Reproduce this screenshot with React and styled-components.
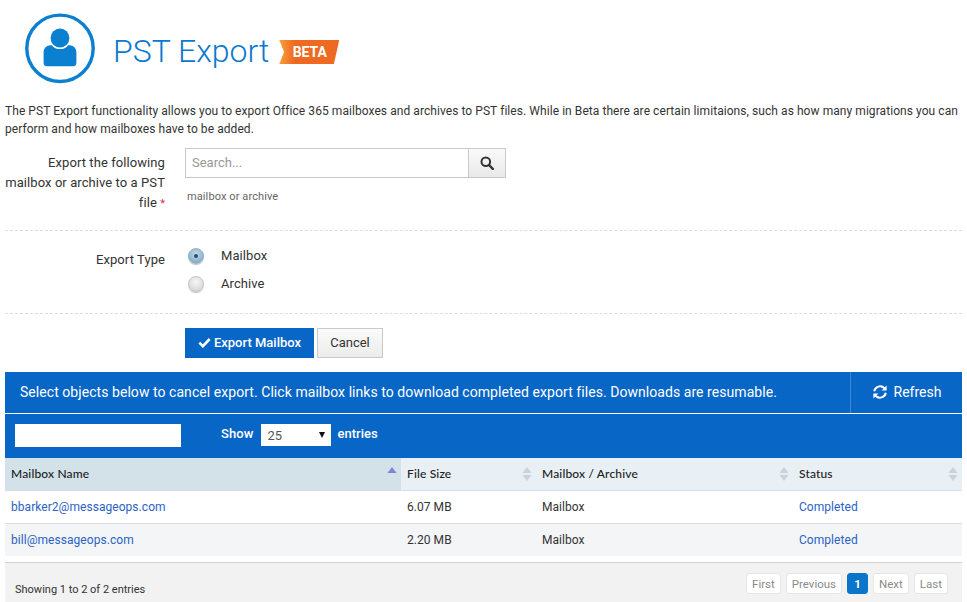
import React from "react";
import styled, { createGlobalStyle } from "styled-components";

const Global = createGlobalStyle`
  html, body { margin: 0; padding: 0; background: #fff; }
  body { font-family: Roboto, "Liberation Sans", sans-serif; color: #333; overflow: hidden; }
  * { box-sizing: border-box; }
`;

const Page = styled.div`
  width: 967px;
  height: 602px;
  padding: 0 5px;
  overflow: hidden;
`;
const Header = styled.header`
  display: flex;
  align-items: center;
  height: 96px;
  padding-left: 20px;
`;
const Title = styled.h1`
  margin: 6px 10px 0 16px;
  font-size: 32px;
  line-height: 40px;
  font-weight: 300;
  color: #0b79d0;
`;
const Intro = styled.p`
  margin: 6px 0 10px;
  font-size: 12px;
  line-height: 18px;
  letter-spacing: 0.065px;
  color: #333;
`;
const Row = styled.div`
  display: flex;
`;
const Label = styled.div`
  width: 160px;
  text-align: right;
  font-size: 13px;
  line-height: 20px;
  letter-spacing: 0.08px;
  color: #333;
  padding-top: ${(p) => p.$top || 0}px;
`;
const Required = styled.span`
  color: #e02a4a;
  font-size: 11px;
`;
const Field = styled.div`
  margin-left: 20px;
`;
const SearchBox = styled.div`
  display: flex;
  width: 321px;
  height: 30px;
`;
const SearchInput = styled.input`
  width: 283px;
  height: 30px;
  border: 1px solid #c9c9c9;
  border-right: none;
  padding: 0 6px 2px;
  font: 13px Roboto, sans-serif;
  &::placeholder { color: #999; opacity: 1; }
`;
const SearchButton = styled.button`
  width: 38px;
  height: 30px;
  border: 1px solid #c9c9c9;
  background: linear-gradient(#fafafa, #e9e9e9);
  display: flex;
  align-items: center;
  justify-content: center;
  padding: 0;
`;
const Hint = styled.div`
  margin: 12px 0 0 2px;
  font-size: 11px;
  line-height: 14px;
  color: #666;
  letter-spacing: 0.1px;
`;
const Dashed = styled.div`
  border-top: 1px dashed #ddd;
  height: 0;
  margin-top: ${(p) => p.$mt}px;
`;
const RadioList = styled.div`
  display: flex;
  flex-direction: column;
  gap: 8px;
  margin-left: 3px;
  padding-top: 14px;
`;
const RadioRow = styled.label`
  display: flex;
  align-items: center;
  height: 20px;
  font-size: 13px;
  letter-spacing: 0.08px;
  color: #333;
`;
const RadioDot = styled.span`
  width: 16px;
  height: 16px;
  border-radius: 50%;
  margin: 1px 17px 0 0;
  display: flex;
  align-items: center;
  justify-content: center;
  background: ${(p) => (p.$on ? "radial-gradient(circle at 50% 35%, #c6dbe9, #6f9fc0)" : "radial-gradient(circle at 50% 35%, #f6f6f6, #cfcfcf)")};
  border: 1px solid ${(p) => (p.$on ? "#8fb2c9" : "#c6c6c6")};
  box-shadow: 0 1px 1px rgba(0,0,0,0.25);
  &::after {
    content: "";
    display: ${(p) => (p.$on ? "block" : "none")};
    width: 4px;
    height: 4px;
    border-radius: 50%;
    background: #2c4f6b;
  }
`;
const Actions = styled.div`
  display: flex;
  gap: 3px;
  margin: 14px 0 14px 180px;
`;
const PrimaryButton = styled.button`
  width: 129px;
  height: 30px;
  border: none;
  background: #0866c6;
  color: #fff;
  font: 500 13px Roboto, sans-serif;
  display: flex;
  align-items: center;
  justify-content: center;
  gap: 3px;
  padding: 0 0 2px;
`;
const CancelButton = styled.button`
  width: 66px;
  height: 30px;
  border: 1px solid #c9c9c9;
  background: linear-gradient(#fbfbfb, #ececec);
  color: #333;
  font: 13px Roboto, sans-serif;
  padding: 0 0 2px;
`;
const Banner = styled.div`
  display: flex;
  height: 41px;
  background: #0866c6;
  color: #fff;
  border-bottom: 1px solid #fff;
  box-sizing: content-box;
`;
const BannerText = styled.div`
  flex: 1;
  padding-left: 15px;
  font-size: 14px;
  line-height: 41px;
  letter-spacing: 0.055px;
`;
const RefreshCell = styled.div`
  width: 112px;
  border-left: 1px solid #3f88d3;
  display: flex;
  align-items: center;
  justify-content: center;
  gap: 6px;
  font-size: 14px;
  padding-bottom: 2px;
`;
const Toolbar = styled.div`
  display: flex;
  align-items: flex-start;
  height: 44px;
  padding: 10px 0 0 10px;
  background: #0866c6;
  color: #fff;
  font-size: 13px;
  font-weight: 500;
`;
const Filter = styled.input`
  width: 166px;
  height: 23px;
  border: none;
  background: #fff;
`;
const ShowLabel = styled.span`
  margin-left: 40px;
  line-height: 20px;
  letter-spacing: 0.1px;
`;
const Select = styled.div`
  width: 70px;
  height: 22px;
  margin: 0 7px;
  background: #fff;
  color: #555;
  font-size: 13px;
  font-weight: 400;
  line-height: 23px;
  padding-left: 7px;
  position: relative;
  &::after {
    content: "";
    position: absolute;
    right: 6px;
    top: 8px;
    border-left: 3px solid transparent;
    border-right: 3px solid transparent;
    border-top: 6px solid #111;
  }
`;
const EntriesLabel = styled.span`
  line-height: 20px;
`;
const Table = styled.table`
  width: 957px;
  table-layout: fixed;
  border-collapse: collapse;
`;
const Th = styled.th`
  width: ${(p) => p.$w}px;
  height: 32px;
  padding: 0 6px 1px;
  text-align: left;
  font: 500 12px Lato, sans-serif;
  letter-spacing: 0.15px;
  color: #222;
  background: ${(p) => (p.$sorted ? "#d3e1e9" : "#e9f0f5")};
  border-bottom: 1px solid #dcdcdc;
  position: relative;
`;
const SortArrows = styled.svg`
  position: absolute;
  right: 4px;
  top: 8px;
`;
const Tr = styled.tr`
  background: ${(p) => (p.$alt ? "#f4f5f7" : "#fff")};
`;
const Td = styled.td`
  height: 33px;
  padding: 0 6px;
  font-size: 12px;
  letter-spacing: 0.05px;
  color: #333;
  border-bottom: ${(p) => (p.$last ? "0" : "1px solid #dcdcdc")};
`;
const CellLink = styled.a`
  color: #2b62c4;
`;
const Footer = styled.div`
  display: flex;
  justify-content: space-between;
  margin-top: 6px;
  height: 40px;
  background: #f2f2f2;
  border-top: 1px solid #d2d2d2;
  padding: 10px 14px 0 10px;
`;
const Showing = styled.div`
  font-size: 11px;
  line-height: 14px;
  margin-top: 10px;
  color: #333;
`;
const Pager = styled.div`
  display: flex;
  gap: 5px;
`;
const PageBtn = styled.div`
  height: 21px;
  padding: 0 5px;
  border-radius: 3px;
  font-size: 11.5px;
  line-height: 20px;
  color: ${(p) => (p.$active ? "#fff" : "#8a8a8a")};
  background: ${(p) => (p.$active ? "#0b76c9" : "#fff")};
  border: 1px solid ${(p) => (p.$active ? "#0b76c9" : "#e6e6e6")};
  font-weight: ${(p) => (p.$active ? 700 : 400)};
  min-width: 21px;
  text-align: center;
`;

const Avatar = () => (
  <svg width="72" height="72" viewBox="0 0 72 72">
    <circle cx="35" cy="36.3" r="33.2" fill="none" stroke="#0b7fd0" strokeWidth="3.4" />
    <circle cx="35" cy="26" r="9.4" fill="#0b7fd0" />
    <path d="M18.6 51v-10.5c0-4.3 3-7.3 6.8-7.3h1.4c2 2.5 4.8 3.9 8.2 3.9s6.2-1.4 8.2-3.9h1.4c3.8 0 6.8 3 6.8 7.3V51c0 2-1.2 3.2-3 3.2H21.6c-1.8 0-3-1.2-3-3.2z" fill="#0b7fd0" />
  </svg>
);
const BetaRibbon = styled.div`
  width: 60px;
  height: 24px;
  margin-top: 8px;
  background: linear-gradient(90deg, #f9a13a, #ee6a23 25%, #ee6a22);
  clip-path: polygon(0 0, 100% 0, 91% 100%, 0 100%, 8% 50%);
  color: #fff;
  font: 700 14px/25px Roboto, sans-serif;
  text-align: center;
  padding-left: 1px;
`;
const Sort = ({ active }) => (
  <SortArrows width="10" height="16" viewBox="0 0 10 16">
    <path d="M5 1 L9.5 7 H.5z" fill={active ? "#7b86d8" : "#ccd3d8"} />
    {!active && <path d="M5 15 L9.5 9 H.5z" fill="#ccd3d8" />}
  </SortArrows>
);

const rows = [
  ["bbarker2@messageops.com", "6.07 MB", "Mailbox", "Completed"],
  ["bill@messageops.com", "2.20 MB", "Mailbox", "Completed"],
];

export default function App() {
  return (
    <Page>
      <Global />
      <Header>
        <Avatar />
        <Title>PST Export</Title>
        <BetaRibbon>BETA</BetaRibbon>
      </Header>
      <Intro>
        The PST Export functionality allows you to export Office 365 mailboxes and archives to PST files. While in Beta there are certain limitaions, such as how many migrations you can perform and how mailboxes have to be added.
      </Intro>
      <Row>
        <Label $top={5}>
          Export the following mailbox or archive to a PST file <Required>*</Required>
        </Label>
        <Field>
          <SearchBox>
            <SearchInput placeholder="Search..." />
            <SearchButton aria-label="Search">
              <svg width="14" height="14" viewBox="0 0 14 14">
                <circle cx="5.8" cy="5.8" r="4.3" fill="none" stroke="#333" strokeWidth="2" />
                <path d="M9 9l3.8 3.8" stroke="#333" strokeWidth="2.4" strokeLinecap="round" />
              </svg>
            </SearchButton>
          </SearchBox>
          <Hint>mailbox or archive</Hint>
        </Field>
      </Row>
      <Dashed $mt={16} />
      <Row>
        <Label $top={19}>Export Type</Label>
        <Field>
          <RadioList>
            <RadioRow><RadioDot $on />Mailbox</RadioRow>
            <RadioRow><RadioDot />Archive</RadioRow>
          </RadioList>
        </Field>
      </Row>
      <Dashed $mt={20} />
      <Actions>
        <PrimaryButton>
          <svg width="13" height="11" viewBox="0 0 13 11">
            <path d="M1.3 5.6l3.6 3.6L11.7 2" fill="none" stroke="#fff" strokeWidth="2.6" />
          </svg>
          Export Mailbox
        </PrimaryButton>
        <CancelButton>Cancel</CancelButton>
      </Actions>
      <Banner>
        <BannerText>Select objects below to cancel export. Click mailbox links to download completed export files. Downloads are resumable.</BannerText>
        <RefreshCell>
          <svg width="16" height="14" viewBox="0 0 16 14">
            <path d="M2.2 6.2A6 6 0 0 1 12.4 3.2" fill="none" stroke="#fff" strokeWidth="2" />
            <path d="M14.6.6v5h-5z" fill="#fff" />
            <path d="M13.8 7.8A6 6 0 0 1 3.6 10.8" fill="none" stroke="#fff" strokeWidth="2" />
            <path d="M1.4 13.4v-5h5z" fill="#fff" />
          </svg>
          Refresh
        </RefreshCell>
      </Banner>
      <Toolbar>
        <Filter aria-label="Filter" />
        <ShowLabel>Show</ShowLabel>
        <Select>25</Select>
        <EntriesLabel>entries</EntriesLabel>
      </Toolbar>
      <Table>
        <thead>
          <tr>
            <Th $w={396} $sorted>Mailbox Name<Sort active /></Th>
            <Th $w={135}>File Size<Sort /></Th>
            <Th $w={257}>Mailbox / Archive<Sort /></Th>
            <Th $w={169}>Status<Sort /></Th>
          </tr>
        </thead>
        <tbody>
          {rows.map((r, i) => (
            <Tr key={r[0]} $alt={i === 1}>
              <Td $last={i === 1}><CellLink>{r[0]}</CellLink></Td>
              <Td $last={i === 1}>{r[1]}</Td>
              <Td $last={i === 1}>{r[2]}</Td>
              <Td $last={i === 1}><CellLink>{r[3]}</CellLink></Td>
            </Tr>
          ))}
        </tbody>
      </Table>
      <Footer>
        <Showing>Showing 1 to 2 of 2 entries</Showing>
        <Pager>
          <PageBtn>First</PageBtn>
          <PageBtn>Previous</PageBtn>
          <PageBtn $active>1</PageBtn>
          <PageBtn>Next</PageBtn>
          <PageBtn>Last</PageBtn>
        </Pager>
      </Footer>
    </Page>
  );
}
